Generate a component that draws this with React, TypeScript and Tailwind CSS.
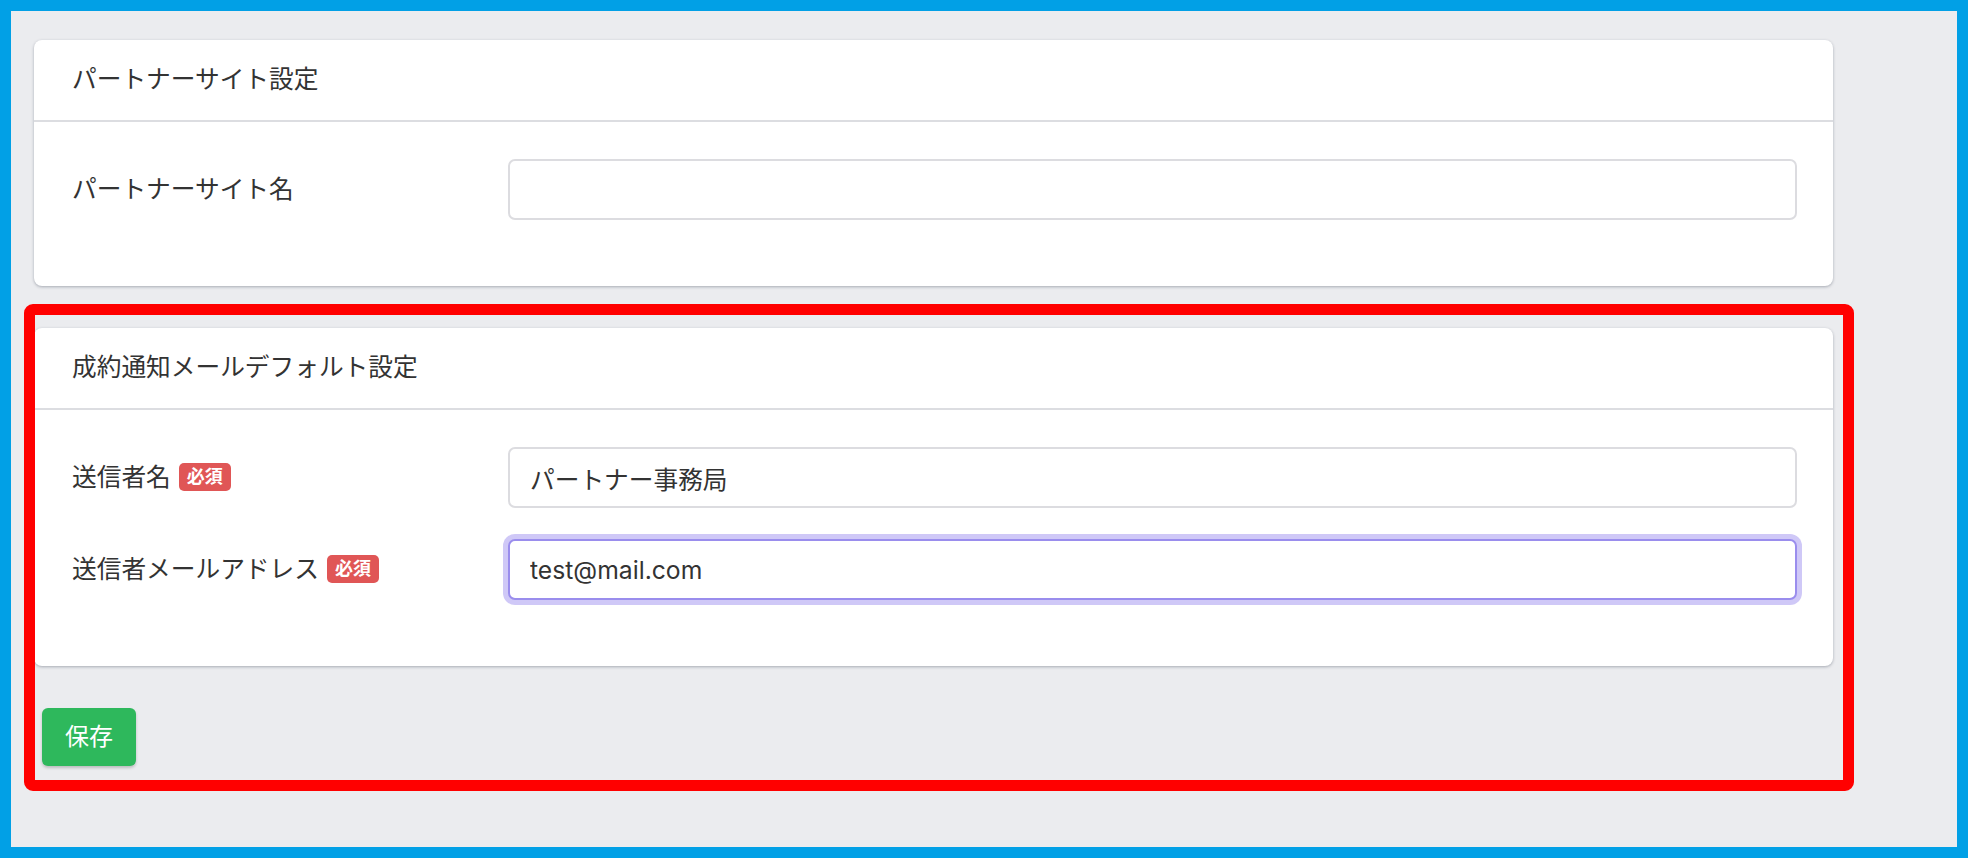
import React from "react";

const font = { fontFamily: 'Inter, "Noto Sans CJK JP", sans-serif' };

function Badge() {
  return (
    <span className="ml-[8px] inline-flex h-[28px] items-center rounded-[5px] bg-[#e05656] px-[8px] text-[18px] font-bold leading-none text-white">
      必須
    </span>
  );
}

function Row({
  label,
  required,
  value,
  focused,
}: {
  label: string;
  required?: boolean;
  value?: string;
  focused?: boolean;
}) {
  return (
    <div className="grid grid-cols-[436px_1fr] items-center">
      <div className="flex items-center text-[24.7px] text-[#333333]">
        <span>{label}</span>
        {required && <Badge />}
      </div>
      <input
        readOnly
        value={value ?? ""}
        className={
          focused
            ? "h-[61px] w-full rounded-[7px] border-2 border-[#9a8ded] bg-white px-[20px] text-[24.7px] text-[#333333] outline-none ring-[5px] ring-[#cfc8f7]"
            : "h-[61px] w-full rounded-[7px] border-2 border-[#dcdce0] bg-white px-[20px] text-[24.7px] text-[#333333] outline-none"
        }
        style={font}
      />
    </div>
  );
}

function Card({ title, children }: { title: string; children: React.ReactNode }) {
  return (
    <div className="rounded-[8px] bg-white shadow-[0_1px_3px_rgba(40,50,70,0.35)]">
      <div className="flex h-[82px] items-center border-b-2 border-[#dcdde1] px-[38px] text-[24.7px] text-[#333333]">
        {title}
      </div>
      <div className="flex flex-col gap-[31px] pb-[66px] pl-[38px] pr-[36px] pt-[37px]">{children}</div>
    </div>
  );
}

export default function App() {
  return (
    <div
      className="box-border h-[858px] w-[1968px] border-[11px] border-[#01a0e6] bg-[#ebecef]"
      style={font}
    >
      <div className="flex w-[1822px] flex-col pl-[23px] pt-[29px]">
        <Card title="パートナーサイト設定">
          <Row label="パートナーサイト名" />
        </Card>

        <div className="relative mt-[42px] flex flex-col">
          <div className="pointer-events-none absolute bottom-[-25px] left-[-10px] right-[-21px] top-[-24px] z-10 rounded-[9px] border-[11px] border-[#ff0000]" />
          <Card title="成約通知メールデフォルト設定">
            <Row label="送信者名" required value="パートナー事務局" />
            <Row label="送信者メールアドレス" required value="test@mail.com" focused />
          </Card>
          <div className="mt-[42px] flex">
            <button className="ml-[8px] flex h-[58px] w-[94px] items-center justify-center rounded-[6px] bg-[#2eb85c] text-[24px] text-white shadow-[0_2px_3px_rgba(0,0,0,0.2)]">
              保存
            </button>
          </div>
        </div>
      </div>
    </div>
  );
}
